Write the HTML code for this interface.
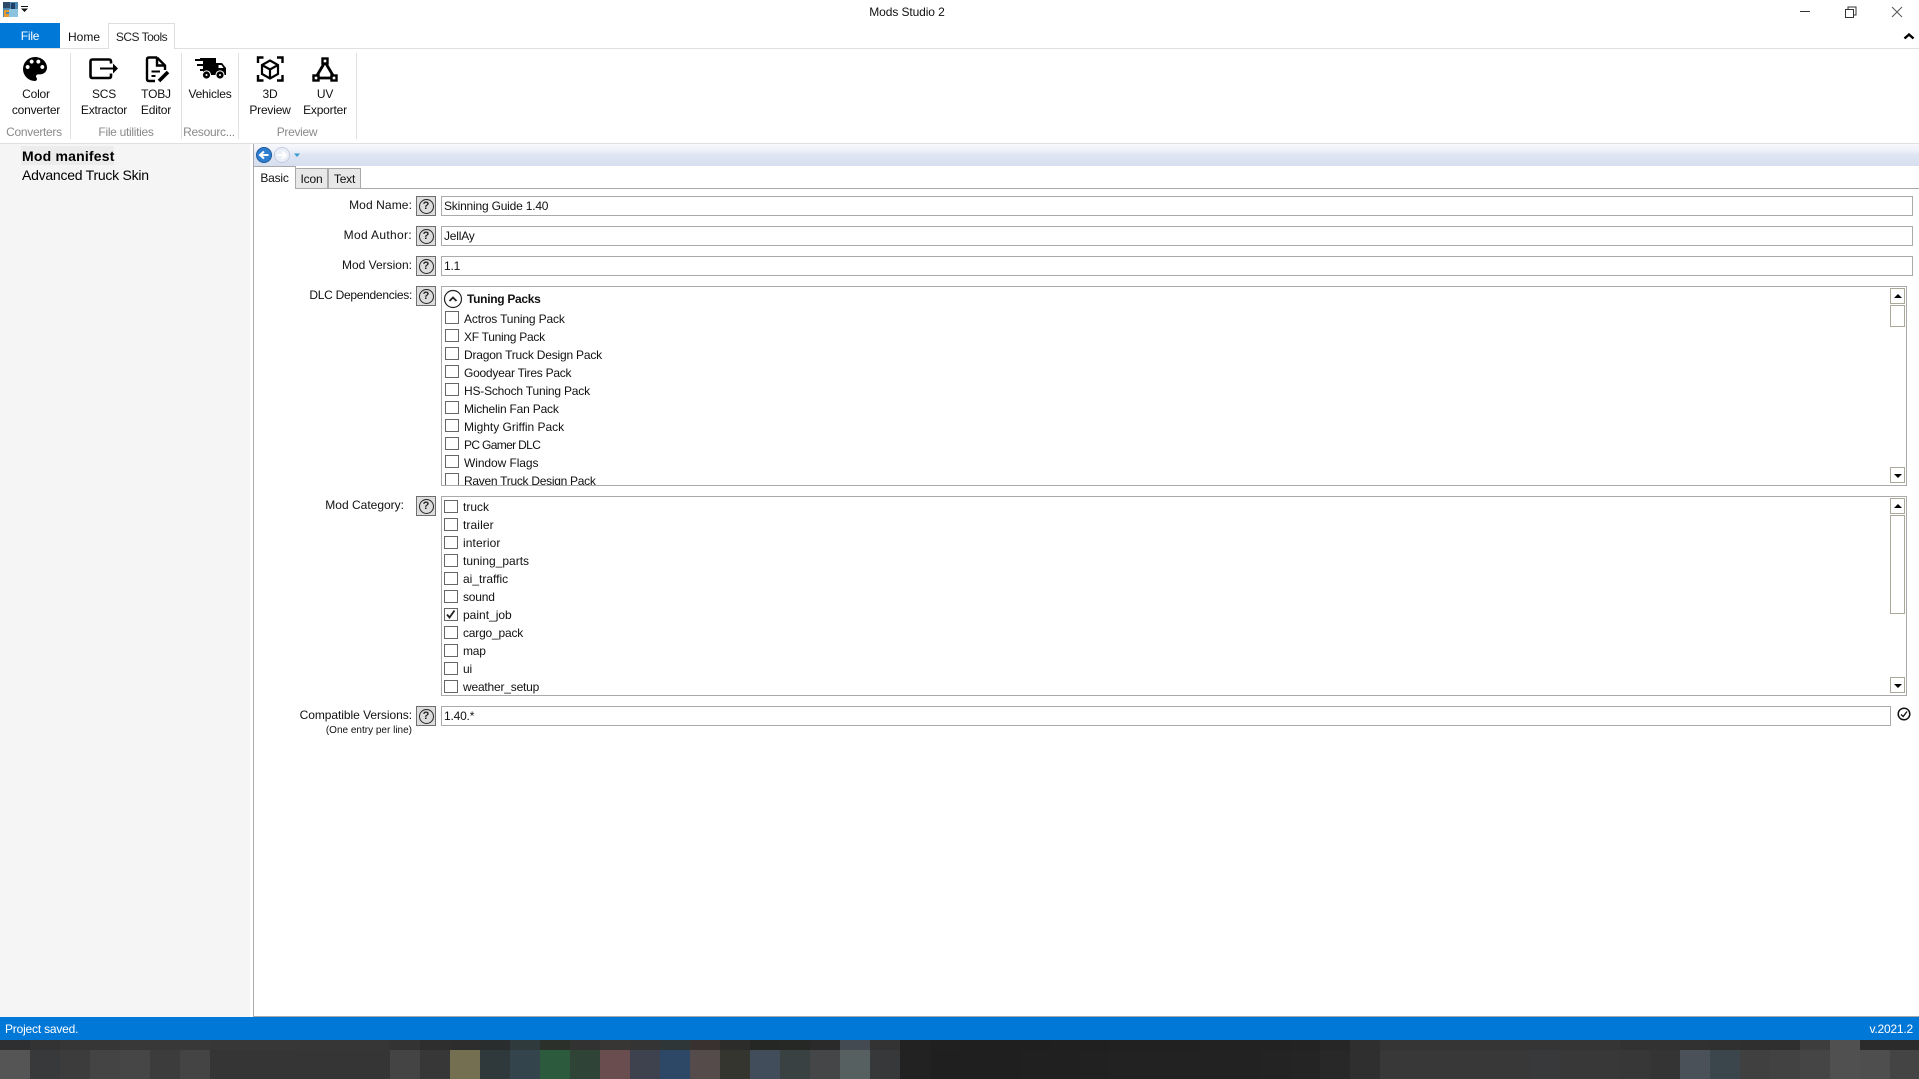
<!DOCTYPE html>
<html><head><meta charset="utf-8"><title>Mods Studio 2</title>
<style>
html,body{margin:0;padding:0;width:1919px;height:1079px;overflow:hidden;background:#fff;font:12px/16px "Liberation Sans",sans-serif;color:#111;letter-spacing:-.2px}
.a,.t,.c,.r{position:absolute}
.t,.c,.r{white-space:nowrap;line-height:16px}
.c{width:120px;text-align:center}
.r{right:1507px;text-align:right;letter-spacing:0}
.g{color:#8a8a8a;letter-spacing:-.3px}
.in{position:absolute;left:441px;height:20px;box-sizing:border-box;border:1px solid #aaa;background:#fff;padding:0 2px;line-height:19px}
.h{position:absolute;left:416px;width:20px;height:20px;box-sizing:border-box;background:#ddd;border:1px solid #6e6e6e}
.h b{position:absolute;left:1.500px;top:1.500px;width:15px;height:15px;box-sizing:border-box;border:1.500px solid #222;border-radius:50%;font:bold 11px/12px "Liberation Sans",sans-serif;text-align:center;color:#222;letter-spacing:0}
.l{position:absolute;left:441px;width:1466px;height:200px;box-sizing:border-box;border:1px solid #aaa;overflow:hidden;background:#fff}
.cb{position:absolute;width:14px;height:13px;box-sizing:border-box;border:1px solid #666;background:#fff}
.sb{position:absolute;left:1448px;width:15px;box-sizing:border-box;border:1px solid #aca899;background:#fff}
.tri{position:absolute;left:3px;top:5px;width:0;height:0;border-left:4px solid transparent;border-right:4px solid transparent}
.up{border-bottom:4px solid #000}.dn{border-top:4px solid #000}
.tab{position:absolute;box-sizing:border-box;text-align:center;line-height:20px;font-size:12px}
.row{display:flex;position:absolute;left:0;width:1919px}
.row i{display:block;width:30px;flex:none}
</style></head><body>

<!-- title bar -->
<svg class="a" style="left:0;top:0" width="40" height="24">
<rect x="3" y="2" width="15" height="15" fill="#4a86b0"/><rect x="9" y="9" width="9" height="8" fill="#8cc4e0"/><rect x="3" y="2" width="7" height="6" fill="#2e4a68"/><rect x="11" y="3" width="4" height="6" fill="#1d3f66"/>
<path d="M4 10h5v2H6v2h3v3H4z" fill="#e89a2c"/>
<rect x="21" y="6" width="7" height="1" fill="#111"/><path d="M21 8.500h7l-3.500 3.500z" fill="#111"/></svg>
<div class="c" style="left:847px;top:4px;letter-spacing:-.1px">Mods Studio 2</div>
<svg class="a" style="left:1790px;top:0" width="129" height="46" fill="none" stroke="#333">
<path d="M10 11.500h10" stroke-width="1"/>
<path d="M55.500 9.500h8v8h-8zM58 9.500v-2.500h8v8h-2.500" stroke-width="1"/>
<path d="M102 7l10 10M112 7l-10 10" stroke-width="1" stroke="#555"/>
<path d="M114.500 38.500l4.500-4 4.500 4" stroke-width="2.400" stroke="#000"/></svg>

<!-- ribbon tabs -->
<div class="a" style="left:0;top:23px;width:60px;height:25px;background:#0078d7;color:#fff;text-align:center;line-height:26px">File</div>
<div class="t" style="left:68px;top:29px;letter-spacing:0">Home</div>
<div class="a" style="left:108px;top:23px;width:67px;height:26px;box-sizing:border-box;border:1px solid #ddd;border-bottom:0;background:#fff;z-index:2;text-align:center;line-height:26px;color:#222;letter-spacing:-.5px">SCS Tools</div>
<div class="a" style="left:0;top:48px;width:1919px;height:1px;background:#e0e0e0"></div>

<!-- ribbon separators -->
<div class="a" style="left:70px;top:53px;width:1px;height:86px;background:#e0e0e0"></div>
<div class="a" style="left:181px;top:53px;width:1px;height:86px;background:#e0e0e0"></div>
<div class="a" style="left:238px;top:53px;width:1px;height:86px;background:#e0e0e0"></div>
<div class="a" style="left:356px;top:53px;width:1px;height:86px;background:#e0e0e0"></div>

<!-- ribbon icons -->
<svg class="a" style="left:0;top:0;z-index:3" width="400" height="100">
<g transform="translate(19 53) scale(1.333)"><path d="M12 3a9 9 0 0 0 0 18c.83 0 1.500-.67 1.500-1.500 0-.39-.15-.74-.39-1.010-.23-.26-.38-.61-.38-.99 0-.83.67-1.500 1.500-1.500H16c2.760 0 5-2.240 5-5 0-4.420-4.030-8-9-8zm-5.500 9c-.83 0-1.500-.67-1.500-1.500S5.670 9 6.500 9 8 9.670 8 10.500 7.330 12 6.500 12zm3-4C8.670 8 8 7.330 8 6.500S8.670 5 9.500 5s1.500.67 1.500 1.500S10.330 8 9.500 8zm5 0c-.83 0-1.500-.67-1.500-1.500S13.670 5 14.500 5s1.500.67 1.500 1.500S15.330 8 14.500 8zm3 4c-.83 0-1.500-.67-1.500-1.500S16.670 9 17.500 9s1.500.67 1.500 1.500-.67 1.500-1.500 1.500z" fill="#000"/></g>
<g fill="none" stroke="#000" stroke-width="2.600">
<path d="M111 63.500V61.500Q111 59.500 109 59.500H92.500Q90.500 59.500 90.500 61.500V76Q90.500 78 92.500 78H109Q111 78 111 76V73.500"/>
<path d="M100 68.500H114" stroke-width="2"/>
<path d="M157 57.500H149Q147 57.500 147 59.500V79Q147 81 149 81H155M157 57.500L165 65.500V70M157 58V65.500H165" stroke-width="2.400"/>
<path d="M151.500 71.500H160M151.500 76H155.500" stroke-width="2"/>
<path d="M159 81L168 72" stroke-width="3.600"/>
<path d="M258 63V57.500H263.500M277 57.500H282.500V63M282.500 75V80.500H277M263.500 80.500H258V75" stroke-width="2.400"/>
<path d="M270 60.500L278 65V74L270 78.500L262 74V65ZM262 65L270 69.500L278 65M270 69.500V78.500" stroke-width="2.200"/>
<path d="M325 62L315.500 78M325 62L334.500 78M316 78H334" stroke-width="2.800"/>
<rect x="322.500" y="58.500" width="5" height="5" stroke-width="2.400" fill="#fff"/>
<rect x="313.500" y="75.500" width="5" height="5" stroke-width="2.400" fill="#fff"/>
<rect x="331.500" y="75.500" width="5" height="5" stroke-width="2.400" fill="#fff"/>
</g>
<path d="M113 63.500L118 68.500L113 73.500Z" fill="#000"/>
<!-- truck -->
<path d="M200 58H216V63H222L226 68V75H203V71H200V69H203V66H197V64H203V61H195V59H200Z" fill="#000"/>
<path d="M218.500 65H221.500L223.500 68H218.500Z" fill="#fff"/>
<circle cx="206.500" cy="75" r="4.600" fill="#fff"/><circle cx="220" cy="75" r="4.600" fill="#fff"/>
<circle cx="206.500" cy="75" r="3.600" fill="#000"/><circle cx="220" cy="75" r="3.600" fill="#000"/>
<circle cx="206.500" cy="75" r="1" fill="#fff"/><circle cx="220" cy="75" r="1" fill="#fff"/>
</svg>

<!-- ribbon labels -->
<div class="c" style="left:-24px;top:86px">Color</div><div class="c" style="left:-24px;top:102px">converter</div>
<div class="c" style="left:44px;top:86px">SCS</div><div class="c" style="left:44px;top:102px">Extractor</div>
<div class="c" style="left:96px;top:86px">TOBJ</div><div class="c" style="left:96px;top:102px">Editor</div>
<div class="c" style="left:150px;top:86px">Vehicles</div>
<div class="c" style="left:210px;top:86px">3D</div><div class="c" style="left:210px;top:102px">Preview</div>
<div class="c" style="left:265px;top:86px">UV</div><div class="c" style="left:265px;top:102px">Exporter</div>
<div class="c g" style="left:-26px;top:124px">Converters</div>
<div class="c g" style="left:66px;top:124px">File utilities</div>
<div class="c g" style="left:149px;top:124px">Resourc...</div>
<div class="c g" style="left:237px;top:124px">Preview</div>
<div class="a" style="left:0;top:143px;width:1919px;height:1px;background:#e0e0e0"></div>

<!-- left pane -->
<div class="a" style="left:0;top:144px;width:250px;height:873px;background:#f5f5f5"></div>
<div class="a" style="left:21px;top:146px;width:93px;height:19px;background:#ececec"></div>
<div class="t" style="left:22px;top:148px;font-size:14px;font-weight:bold;color:#000;letter-spacing:.2px">Mod manifest</div>
<div class="t" style="left:22px;top:167px;font-size:14px;color:#000;letter-spacing:-.25px">Advanced Truck Skin</div>

<!-- right pane frame -->
<div class="a" style="left:253px;top:144px;width:1px;height:873px;background:#aaa"></div>
<div class="a" style="left:253px;top:1016px;width:1666px;height:1px;background:#aaa"></div>
<div class="a" style="left:254px;top:144px;width:1665px;height:22px;background:linear-gradient(#f8f9fc 0,#eef1f8 6px,#dfe5f3 11px,#d6deef 22px)"></div>
<svg class="a" style="left:254px;top:144px" width="60" height="22">
<circle cx="10" cy="11" r="7.500" fill="#2f7fd0" stroke="#1c5a9e"/><path d="M14.500 11H7M10 7.500L6 11L10 14.500" fill="none" stroke="#fff" stroke-width="2"/>
<circle cx="28" cy="11" r="7.500" fill="#eaeef7" stroke="#c4cce0"/><path d="M23.500 11H31M28 7.500L32 11L28 14.500" fill="none" stroke="#fff" stroke-width="2"/>
<path d="M40 9.500h6l-3 3.500z" fill="#3a9ad0"/></svg>

<!-- tabs -->
<div class="a" style="left:296px;top:188px;width:1623px;height:1px;background:#aaa"></div>
<div class="tab" style="left:253px;top:166px;width:43px;height:23px;border:1px solid #aaa;border-bottom:0;background:#fff;z-index:2;line-height:22px">Basic</div>
<div class="tab" style="left:295px;top:168px;width:33px;height:21px;border:1px solid #aaa;background:#e8e8e8">Icon</div>
<div class="tab" style="left:328px;top:168px;width:33px;height:21px;border:1px solid #aaa;background:#e8e8e8">Text</div>

<!-- form -->
<div class="r" style="top:197px;letter-spacing:.1px">Mod Name:</div>
<div class="h" style="top:196px"><b>?</b></div>
<div class="in" style="top:196px;width:1472px">Skinning Guide 1.40</div>
<div class="r" style="top:227px;letter-spacing:.33px">Mod Author:</div>
<div class="h" style="top:226px"><b>?</b></div>
<div class="in" style="top:226px;width:1472px">JellAy</div>
<div class="r" style="top:257px">Mod Version:</div>
<div class="h" style="top:256px"><b>?</b></div>
<div class="in" style="top:256px;width:1472px">1.1</div>

<div class="r" style="top:287px;letter-spacing:-.28px">DLC Dependencies:</div>
<div class="h" style="top:286px"><b>?</b></div>
<div class="l" style="top:286px">
<svg class="a" style="left:1px;top:2px" width="22" height="20"><circle cx="10" cy="10" r="8.500" fill="#fff" stroke="#222" stroke-width="1.200"/><path d="M6.500 12l3.500-3.500 3.500 3.500" fill="none" stroke="#222" stroke-width="1.800"/></svg>
<div class="t" style="left:25px;top:4px;font-weight:bold;letter-spacing:-.3px">Tuning Packs</div>
<div class="cb" style="left:3px;top:24px"></div><div class="t" style="left:22px;top:24px;letter-spacing:-.15px">Actros Tuning Pack</div>
<div class="cb" style="left:3px;top:42px"></div><div class="t" style="left:22px;top:42px;letter-spacing:-.28px">XF Tuning Pack</div>
<div class="cb" style="left:3px;top:60px"></div><div class="t" style="left:22px;top:60px">Dragon Truck Design Pack</div>
<div class="cb" style="left:3px;top:78px"></div><div class="t" style="left:22px;top:78px;letter-spacing:-.25px">Goodyear Tires Pack</div>
<div class="cb" style="left:3px;top:96px"></div><div class="t" style="left:22px;top:96px">HS-Schoch Tuning Pack</div>
<div class="cb" style="left:3px;top:114px"></div><div class="t" style="left:22px;top:114px">Michelin Fan Pack</div>
<div class="cb" style="left:3px;top:132px"></div><div class="t" style="left:22px;top:132px;letter-spacing:-.02px">Mighty Griffin Pack</div>
<div class="cb" style="left:3px;top:150px"></div><div class="t" style="left:22px;top:150px;letter-spacing:-.65px">PC Gamer DLC</div>
<div class="cb" style="left:3px;top:168px"></div><div class="t" style="left:22px;top:168px;letter-spacing:-.08px">Window Flags</div>
<div class="cb" style="left:3px;top:186px"></div><div class="t" style="left:22px;top:186px;letter-spacing:-.28px">Raven Truck Design Pack</div>
<div class="sb" style="top:1px;height:16px"><div class="tri up"></div></div>
<div class="sb" style="top:18px;height:22px"></div>
<div class="sb" style="top:180px;height:16px"><div class="tri dn" style="top:6px"></div></div>
</div>

<div class="r" style="top:497px;right:1515px;letter-spacing:0">Mod Category:</div>
<div class="h" style="top:496px"><b>?</b></div>
<div class="l" style="top:496px">
<div class="cb" style="left:2px;top:3px"></div><div class="t" style="left:21px;top:2px;letter-spacing:0">truck</div>
<div class="cb" style="left:2px;top:21px"></div><div class="t" style="left:21px;top:20px;letter-spacing:.1px">trailer</div>
<div class="cb" style="left:2px;top:39px"></div><div class="t" style="left:21px;top:38px;letter-spacing:.1px">interior</div>
<div class="cb" style="left:2px;top:57px"></div><div class="t" style="left:21px;top:56px;letter-spacing:0">tuning_parts</div>
<div class="cb" style="left:2px;top:75px"></div><div class="t" style="left:21px;top:74px;letter-spacing:0">ai_traffic</div>
<div class="cb" style="left:2px;top:93px"></div><div class="t" style="left:21px;top:92px">sound</div>
<div class="cb" style="left:2px;top:111px"><svg class="a" style="left:0;top:0" width="12" height="11"><path d="M2 5.500L4.500 8.500L9.500 1.500" fill="none" stroke="#222" stroke-width="1.800"/></svg></div><div class="t" style="left:21px;top:110px;letter-spacing:0">paint_job</div>
<div class="cb" style="left:2px;top:129px"></div><div class="t" style="left:21px;top:128px">cargo_pack</div>
<div class="cb" style="left:2px;top:147px"></div><div class="t" style="left:21px;top:146px">map</div>
<div class="cb" style="left:2px;top:165px"></div><div class="t" style="left:21px;top:164px">ui</div>
<div class="cb" style="left:2px;top:183px"></div><div class="t" style="left:21px;top:182px">weather_setup</div>
<div class="sb" style="top:1px;height:16px"><div class="tri up"></div></div>
<div class="sb" style="top:18px;height:99px"></div>
<div class="sb" style="top:180px;height:16px"><div class="tri dn" style="top:6px"></div></div>
</div>

<div class="r" style="top:707px;letter-spacing:-.05px">Compatible Versions:</div>
<div class="h" style="top:706px"><b>?</b></div>
<div class="in" style="top:706px;width:1450px">1.40.*</div>
<div class="r" style="top:723px;font-size:10px">(One entry per line)</div>
<svg class="a" style="left:1896px;top:706px" width="16" height="16"><circle cx="8" cy="8" r="5.800" fill="none" stroke="#111" stroke-width="1.500"/><path d="M5 8.500L7.200 10.500L11 5.500" fill="none" stroke="#111" stroke-width="1.300"/></svg>

<!-- status bar -->
<div class="a" style="left:0;top:1017px;width:1919px;height:23px;background:#0078d7"></div>
<div class="t" style="left:5px;top:1021px;color:#fff">Project saved.</div>
<div class="t" style="right:6px;top:1021px;color:#fff">v.2021.2</div>

<!-- taskbar mosaic -->
<div class="row" style="top:1040px;height:10px;background:#2b2b2b">
<i style="background:#2d2f30"></i><i style="background:#333"></i><i style="background:#363636"></i><i style="background:#363636"></i><i style="background:#383838"></i><i style="background:#383838"></i><i style="background:#383838"></i><i style="background:#373737"></i><i style="background:#373737"></i><i style="background:#373737"></i><i style="background:#363636"></i><i style="background:#363636"></i><i style="background:#363636"></i><i style="background:#333"></i><i style="background:#2e2e2e"></i><i style="background:#2d2d2d"></i><i style="background:#2a2d2d"></i><i style="background:#2f3a3c"></i><i style="background:#2b302b"></i><i style="background:#323232"></i><i style="background:#383635"></i><i style="background:#343434"></i><i style="background:#2f3637"></i><i style="background:#383130"></i><i style="background:#2c2d2a"></i><i style="background:#252725"></i><i style="background:#262826"></i><i style="background:#2a2a2a"></i><i style="background:#444a52"></i><i style="background:#333"></i><i style="background:#222"></i><i style="background:#202020"></i>
<i style="background:#1f1f1f"></i><i style="background:#1f1f1f"></i><i style="background:#1f1f1f"></i><i style="background:#202020"></i><i style="background:#202020"></i><i style="background:#212121"></i><i style="background:#212121"></i><i style="background:#212121"></i><i style="background:#222"></i><i style="background:#222"></i><i style="background:#222"></i><i style="background:#232323"></i><i style="background:#262626"></i><i style="background:#2e2f2e"></i><i style="background:#343534"></i><i style="background:#343534"></i><i style="background:#343534"></i><i style="background:#343534"></i><i style="background:#343534"></i><i style="background:#343534"></i><i style="background:#343534"></i><i style="background:#343534"></i><i style="background:#323232"></i><i style="background:#323232"></i><i style="background:#313131"></i><i style="background:#303030"></i><i style="background:#2f2f2f"></i><i style="background:#2f2f2f"></i><i style="background:#3d3d3d"></i><i style="background:#505050"></i><i style="background:#2b2b2b"></i><i style="background:#2b2b2b"></i><i style="background:#2b2b2b"></i><i style="background:#2b2b2b"></i>
</div>
<div class="row" style="top:1050px;height:29px;background:#444">
<i style="background:#555"></i><i style="background:#38393b"></i><i style="background:#3c3c3c"></i><i style="background:#444"></i><i style="background:#464646"></i><i style="background:#3c3c3c"></i><i style="background:#444"></i><i style="background:#353535"></i><i style="background:#353535"></i><i style="background:#353535"></i><i style="background:#353535"></i><i style="background:#353535"></i><i style="background:#353535"></i><i style="background:#444"></i><i style="background:#373737"></i><i style="background:#736f50"></i><i style="background:#2f393c"></i><i style="background:#34444c"></i><i style="background:#2b5a3c"></i><i style="background:#304337"></i><i style="background:#6a4d4f"></i><i style="background:#3d424e"></i><i style="background:#2d4866"></i><i style="background:#564b4b"></i><i style="background:#34352f"></i><i style="background:#424d5c"></i><i style="background:#394142"></i><i style="background:#444648"></i><i style="background:#566060"></i><i style="background:#37383a"></i><i style="background:#222"></i><i style="background:#1f1f1f"></i>
<i style="background:#1f1f1f"></i><i style="background:#1f1f1f"></i><i style="background:#202020"></i><i style="background:#202020"></i><i style="background:#212121"></i><i style="background:#222"></i><i style="background:#222"></i><i style="background:#222"></i><i style="background:#222"></i><i style="background:#222"></i><i style="background:#232323"></i><i style="background:#242424"></i><i style="background:#272827"></i><i style="background:#2e2f2e"></i><i style="background:#373837"></i><i style="background:#373837"></i><i style="background:#373837"></i><i style="background:#373837"></i><i style="background:#373837"></i><i style="background:#38393a"></i><i style="background:#373837"></i><i style="background:#373837"></i><i style="background:#363736"></i><i style="background:#343434"></i><i style="background:#4a5158"></i><i style="background:#3b464c"></i><i style="background:#404040"></i><i style="background:#424242"></i><i style="background:#454545"></i><i style="background:#505050"></i><i style="background:#4e4e4e"></i><i style="background:#444"></i>
</div>
</body></html>
